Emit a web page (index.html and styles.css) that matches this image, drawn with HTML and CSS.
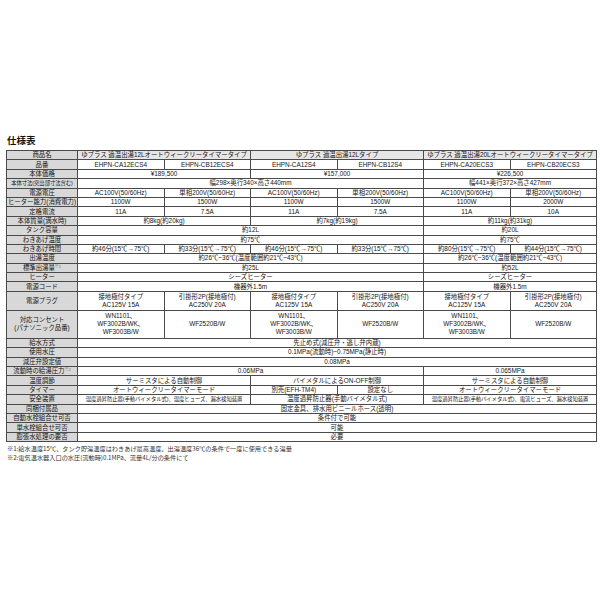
FILE: index.html
```html
<!DOCTYPE html>
<html lang="ja">
<head>
<meta charset="utf-8">
<title>仕様表</title>
<link rel="stylesheet" href="styles.css">
</head>
<body>
<div class="page">
  <h2 class="title">仕様表</h2>
  <table class="spec">
    <colgroup><col class="c-label"><col><col><col><col><col><col></colgroup>
    <tbody>
      <tr class="head">
        <th>商品名</th>
        <td colspan="2">ゆプラス 適温出湯12Lオートウィークリータイマータイプ</td>
        <td colspan="2">ゆプラス 適温出湯12Lタイプ</td>
        <td colspan="2">ゆプラス 適温出湯20Lオートウィークリータイマータイプ</td>
      </tr>
      <tr>
        <th>品番</th>
        <td>EHPN-CA12ECS4</td><td>EHPN-CB12ECS4</td><td>EHPN-CA12S4</td><td>EHPN-CB12S4</td><td>EHPN-CA20ECS3</td><td>EHPN-CB20ECS3</td>
      </tr>
      <tr>
        <th>本体価格</th>
        <td colspan="2">¥189,500</td><td colspan="2">¥157,000</td><td colspan="2">¥226,500</td>
      </tr>
      <tr>
        <th class="tight">本体寸法(突出部寸法含む)</th>
        <td colspan="4">幅298×奥行340×高さ440mm</td><td colspan="2">幅441×奥行372×高さ427mm</td>
      </tr>
      <tr>
        <th>電源電圧</th>
        <td>AC100V(50/60Hz)</td><td>単相200V(50/60Hz)</td><td>AC100V(50/60Hz)</td><td>単相200V(50/60Hz)</td><td>AC100V(50/60Hz)</td><td>単相200V(50/60Hz)</td>
      </tr>
      <tr>
        <th>ヒーター能力(消費電力)</th>
        <td>1100W</td><td>1500W</td><td>1100W</td><td>1500W</td><td>1100W</td><td>2000W</td>
      </tr>
      <tr>
        <th>定格電流</th>
        <td>11A</td><td>7.5A</td><td>11A</td><td>7.5A</td><td>11A</td><td>10A</td>
      </tr>
      <tr>
        <th>本体質量(満水時)</th>
        <td colspan="2">約8kg(約20kg)</td><td colspan="2">約7kg(約19kg)</td><td colspan="2">約11kg(約31kg)</td>
      </tr>
      <tr>
        <th>タンク容量</th>
        <td colspan="4">約12L</td><td colspan="2">約20L</td>
      </tr>
      <tr>
        <th>わきあげ温度</th>
        <td colspan="4">約75℃</td><td colspan="2">約75℃</td>
      </tr>
      <tr>
        <th>わきあげ時間</th>
        <td>約46分(15℃→75℃)</td><td>約33分(15℃→75℃)</td><td>約46分(15℃→75℃)</td><td>約33分(15℃→75℃)</td><td>約80分(15℃→75℃)</td><td>約44分(15℃→75℃)</td>
      </tr>
      <tr>
        <th>出湯温度</th>
        <td colspan="4">約26℃~36℃(温度範囲約21℃~43℃)</td><td colspan="2">約26℃~36℃(温度範囲約21℃~43℃)</td>
      </tr>
      <tr>
        <th>標準出湯量<span class="note">※1</span></th>
        <td colspan="4">約25L</td><td colspan="2">約52L</td>
      </tr>
      <tr>
        <th>ヒーター</th>
        <td colspan="4">シーズヒーター</td><td colspan="2">シーズヒーター</td>
      </tr>
      <tr>
        <th>電源コード</th>
        <td colspan="4">機器外1.5m</td><td colspan="2">機器外1.5m</td>
      </tr>
      <tr class="r2">
        <th>電源プラグ</th>
        <td>接地極付タイプ<br>AC125V 15A</td><td>引掛形2P(接地極付)<br>AC250V 20A</td>
        <td>接地極付タイプ<br>AC125V 15A</td><td>引掛形2P(接地極付)<br>AC250V 20A</td>
        <td>接地極付タイプ<br>AC125V 15A</td><td>引掛形2P(接地極付)<br>AC250V 20A</td>
      </tr>
      <tr class="r3">
        <th>対応コンセント<br>(パナソニック品番)</th>
        <td>WN1101、<br>WF3002B/WK、<br>WF3003B/W</td><td>WF2520B/W</td>
        <td>WN1101、<br>WF3002B/WK、<br>WF3003B/W</td><td>WF2520B/W</td>
        <td>WN1101、<br>WF3002B/WK、<br>WF3003B/W</td><td>WF2520B/W</td>
      </tr>
      <tr>
        <th>給水方式</th>
        <td colspan="6">先止め式(減圧弁・逃し弁内蔵)</td>
      </tr>
      <tr>
        <th>使用水圧</th>
        <td colspan="6">0.1MPa(流動時)~0.75MPa(静止時)</td>
      </tr>
      <tr>
        <th>減圧弁設定値</th>
        <td colspan="6">0.08MPa</td>
      </tr>
      <tr>
        <th>流動時の給湯圧力<span class="note">※2</span></th>
        <td colspan="4">0.06MPa</td><td colspan="2">0.065MPa</td>
      </tr>
      <tr>
        <th>温度調節</th>
        <td colspan="2">サーミスタによる自動制御</td><td colspan="2">バイメタルによるON-OFF制御</td><td colspan="2">サーミスタによる自動制御</td>
      </tr>
      <tr>
        <th>タイマー</th>
        <td colspan="2">オートウィークリータイマーモード</td><td>別売(EFH-TM4)</td><td>設定なし</td><td colspan="2">オートウィークリータイマーモード</td>
      </tr>
      <tr>
        <th>安全装置</th>
        <td colspan="2" class="small">温度過昇防止器(手動バイメタル式)、温度ヒューズ、漏水検知装置</td><td colspan="2">温度過昇防止器(手動バイメタル式)</td><td colspan="2" class="small">温度過昇防止器(手動バイメタル式)、電流ヒューズ、漏水検知装置</td>
      </tr>
      <tr>
        <th>同梱付属品</th>
        <td colspan="6">固定金具、排水用ビニールホース(透明)</td>
      </tr>
      <tr>
        <th>自動水栓組合せ可否</th>
        <td colspan="6">条件付で可能</td>
      </tr>
      <tr>
        <th>単水栓組合せ可否</th>
        <td colspan="6">可能</td>
      </tr>
      <tr>
        <th>膨張水処理の要否</th>
        <td colspan="6">必要</td>
      </tr>
    </tbody>
  </table>
  <p class="foot">※1:給水温度15℃、タンク貯湯温度はわきあげ最高温度、出湯温度36℃の条件で一度に使用できる湯量</p>
  <p class="foot">※2:電気温水器入口の水圧(流動時)0.1MPa、流量4L/分の条件にて</p>
</div>
</body>
</html>
```

FILE: styles.css
```css
html, body {
  margin: 0;
  padding: 0;
  background: #ffffff;
}

.page {
  padding: 135px 3px 0 6px;
  font-family: "Liberation Sans", "Noto Sans CJK JP", sans-serif;
  color: #151515;
}

.title {
  margin: 0 0 4px 1px;
  font-family: "Noto Sans CJK JP", sans-serif;
  font-size: 9.5px;
  line-height: 11px;
  font-weight: bold;
  color: #111111;
}

.spec {
  width: 591px;
  table-layout: fixed;
  border-collapse: collapse;
  font-size: 6.4px;
  line-height: 8px;
}

.c-label {
  width: 71px;
}

.spec tr {
  height: 9.4px;
}

.spec tr.r2 {
  height: 18.8px;
}

.spec tr.r3 {
  height: 28.2px;
}

.spec th,
.spec td {
  border: 1px solid #4a4a4a;
  padding: 0;
  text-align: center;
  vertical-align: middle;
  white-space: nowrap;
  font-weight: normal;
}

.spec th {
  background: #d8d8d8;
  color: #151515;
}

.spec tr.head td {
  background: #e6e6e6;
}

.spec th.tight {
  font-size: 5.4px;
  letter-spacing: -0.1px;
}

.spec td.small {
  font-size: 5.4px;
  letter-spacing: -0.1px;
}

.note {
  font-size: 4px;
  vertical-align: top;
  line-height: 5px;
  color: #666666;
}

.foot {
  margin: 0 0 0 1px;
  font-family: "Noto Sans CJK JP", sans-serif;
  font-size: 6.2px;
  line-height: 9px;
  color: #333333;
}

.spec + .foot {
  margin-top: 2px;
}
```
